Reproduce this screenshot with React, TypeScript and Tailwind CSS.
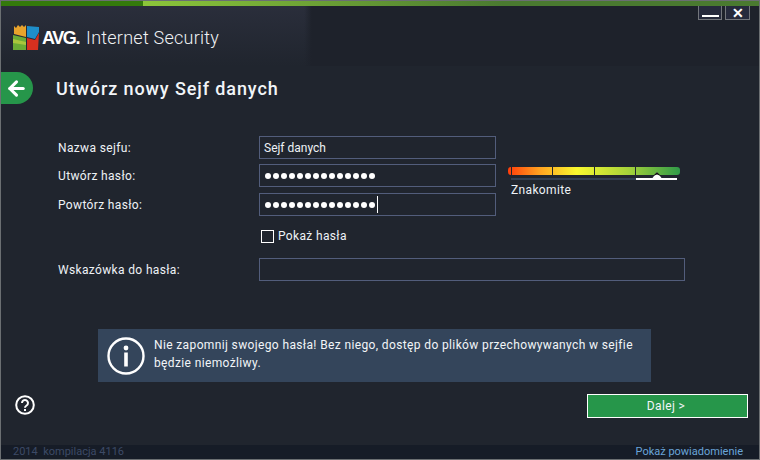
import { ArrowLeft } from "lucide-react";

const din = "font-['Roboto',sans-serif]";

function Logo() {
  return (
    <svg width="28" height="26" viewBox="0 0 28 26" className="shrink-0">
      <polygon points="1,9 1,1 3,3 5,0 7,2 9,0 11,2 13,0 13,12" fill="#e8a32c" />
      <polygon points="0,10 13,13 13,25 0,25" fill="#6cab35" />
      <polygon points="0,14 13,17 13,20 0,18" fill="#a9c63c" />
      <polygon points="14,1 26,2 26,7 22,14 14,12" fill="#1f8ec9" />
      <polygon points="14,13 22,15 26,8 25,25 14,25" fill="#d5301f" />
    </svg>
  );
}

function Row({ label, children }: { label: string; children: React.ReactNode }) {
  return (
    <div className="flex items-center">
      <div className="w-[201px] text-[12px] tracking-[0.35px] text-[#eef2f6]">{label}</div>
      {children}
    </div>
  );
}

function Field({ children, wide }: { children?: React.ReactNode; wide?: boolean }) {
  return (
    <div className={`flex h-[23px] items-center border border-[#525d7b] pl-[4px] text-[12px] text-[#eef2f6] ${wide ? "w-[426px]" : "w-[237px]"}`}>
      {children}
    </div>
  );
}

function Dots({ caret }: { caret?: boolean }) {
  return (
    <div className="flex items-center gap-[2px] pl-[1px]">
      {Array.from({ length: 14 }).map((_, i) => (
        <span key={i} className="h-[6px] w-[6px] rounded-full bg-white" />
      ))}
      {caret && <span className="h-[17px] w-px bg-white" />}
    </div>
  );
}

function Strength() {
  return (
    <div className="ml-[12px] mt-[3px] flex w-[172px] flex-col">
      <div className="flex h-[8px] items-stretch justify-between rounded-[3px] bg-[linear-gradient(90deg,#ff3d0a_0%,#ffa020_18%,#f8f82f_40%,#a5d23a_70%,#2f9a48_100%)] px-[3px]">
        <span className="w-px bg-[#20252e]" />
        <span className="w-px bg-[#20252e]" />
        <span className="w-px bg-[#20252e]" />
        <span className="w-px bg-[#20252e]" />
        <span className="w-px bg-transparent" />
      </div>
      <div className="relative ml-[3px] mt-[3px] flex h-[2px] w-[166px]">
        <div className="w-[125px] bg-[#323f52]" />
        <div className="flex-1 bg-white" />
        <svg width="12" height="8" viewBox="0 0 12 8" className="absolute left-[140px] top-[-6px]">
          <polygon points="0,8 6,0 12,8" fill="#fff" />
          <polygon points="2,4 6,0 10,4 6,2.5" fill="#111" />
        </svg>
      </div>
      <div className="ml-[3px] mt-[1px] text-[12px] tracking-[0.35px] text-[#eef2f6]">Znakomite</div>
    </div>
  );
}

export default function App() {
  return (
    <div className={`flex h-[460px] w-[760px] flex-col overflow-hidden border-x border-b border-[#6b6f72] bg-[#20252e] ${din}`}>
      <div className="flex h-[6px] shrink-0 border-t border-[#6b6f72] bg-[#4a7a30]">
        <div className="w-[142px] bg-[#347a0c]" />
        <div className="w-[360px] bg-[linear-gradient(90deg,#8cc63a,#4a7a30)]" />
      </div>

      {/* header */}
      <div className="flex h-[60px] shrink-0 flex-col bg-[linear-gradient(90deg,transparent_40%,#1e222b_41%),linear-gradient(180deg,#2a2e3b,#20252e)]">
        <div className="flex justify-end gap-[3px] pr-[9px]">
          <button className="flex h-[14px] w-[24px] items-end justify-center border-x border-b border-[#73767c] bg-[#262a3c] pb-[2px]">
            <span className="h-[2px] w-[17px] bg-white" />
          </button>
          <button className="flex h-[14px] w-[25px] items-center justify-center border-x border-b border-[#73767c] bg-[#262a3c] text-[14px] font-bold leading-none text-white">
            ✕
          </button>
        </div>
        <div className="mt-[5px] flex items-center pl-[12px]">
          <Logo />
          <span className="ml-[1px] font-['Liberation_Sans',sans-serif] text-[18px] font-bold leading-none tracking-[-1.4px] text-white">AVG.</span>
          <span className="ml-[7px] text-[18px] font-light leading-none tracking-[0.25px] text-[#f0f2f4]">Internet Security</span>
        </div>
      </div>

      {/* title */}
      <div className="mt-[6px] flex items-center">
        <button className="flex h-[32px] w-[32px] items-center justify-start rounded-r-[16px] bg-[#26964a] pl-[4px] text-white">
          <ArrowLeft size={23} strokeWidth={3.2} />
        </button>
        <h1 className="ml-[23px] pt-[1px] text-[18px] font-medium tracking-[0.9px] text-[#f2f5f8]">Utwórz nowy Sejf danych</h1>
      </div>

      {/* form */}
      <div className="ml-[57px] mt-[32px] flex flex-col gap-[5px]">
        <Row label="Nazwa sejfu:">
          <Field>Sejf danych</Field>
        </Row>
        <div className="flex items-start">
          <div className="flex flex-col gap-[6px]">
            <Row label="Utwórz hasło:">
              <Field><Dots /></Field>
            </Row>
            <Row label="Powtórz hasło:">
              <Field><Dots caret /></Field>
            </Row>
          </div>
          <Strength />
        </div>
        <label className="ml-[203px] mt-[6px] flex items-center gap-[4px] text-[12px] tracking-[0.35px] text-[#eef2f6]">
          <span className="h-[13px] w-[13px] border border-white" />
          Pokaż hasła
        </label>
        <div className="mt-[8px]">
          <Row label="Wskazówka do hasła:">
            <Field wide />
          </Row>
        </div>
      </div>

      {/* notice */}
      <div className="ml-[97px] mt-[48px] flex h-[53px] w-[553px] items-center bg-[#34455b] pl-[9px]">
        <svg width="38" height="38" viewBox="0 0 38 38" className="shrink-0">
          <circle cx="19" cy="19" r="17.5" fill="none" stroke="#fff" strokeWidth="2.4" />
          <circle cx="19" cy="11" r="2.4" fill="#fff" />
          <rect x="17.2" y="15.5" width="3.6" height="14" fill="#fff" />
        </svg>
        <p className="ml-[9px] w-[495px] pb-[3px] text-[12px] leading-[18px] tracking-[0.37px] text-[#f2f5f8]">
          Nie zapomnij swojego hasła! Bez niego, dostęp do plików przechowywanych w sejfie będzie niemożliwy.
        </p>
      </div>

      {/* bottom actions */}
      <div className="mt-[12px] flex items-start justify-between pl-[14px] pr-[11px]">
        <svg width="20" height="20" viewBox="0 0 20 20" className="mt-[1px]">
          <circle cx="10" cy="10" r="8.8" fill="none" stroke="#fff" strokeWidth="2" />
          <path d="M7 8 a3 3 0 1 1 4.6 2.5 c-1.1.7-1.6 1.1-1.6 2.2" fill="none" stroke="#fff" strokeWidth="2" />
          <rect x="9" y="14" width="2" height="2" fill="#fff" />
        </svg>
        <button className="h-[24px] w-[161px] border border-white bg-[#26964a] pr-[3px] text-[12px] tracking-[0.4px] text-[#f2f5f8]">Dalej &gt;</button>
      </div>

      {/* footer */}
      <div className="mt-auto flex h-[14px] shrink-0 items-center justify-between bg-[#161c27] pl-[12px] pr-[16px] text-[11px]">
        <span className="whitespace-pre text-[#3d4a66]">2014  kompilacja 4116</span>
        <span className="text-[#6aa5d8]">Pokaż powiadomienie</span>
      </div>
    </div>
  );
}
